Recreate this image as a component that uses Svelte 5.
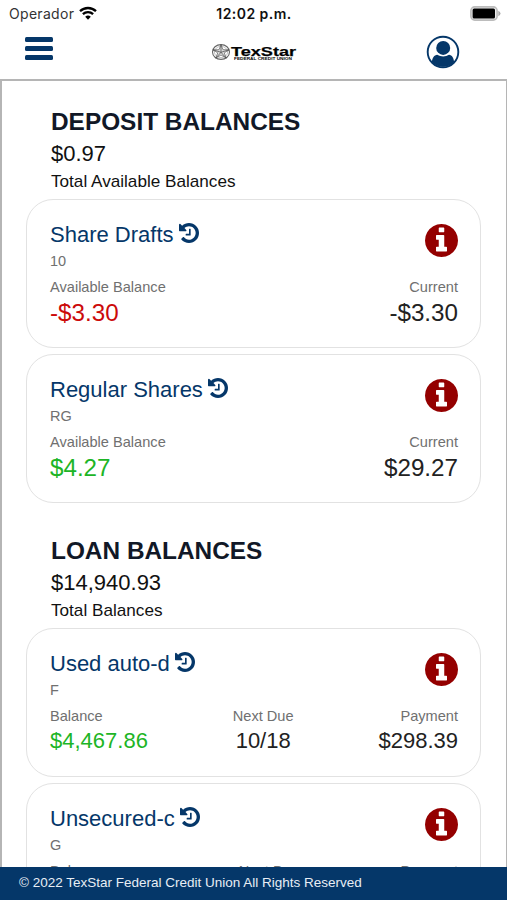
<script>
	// Accounts grouped by section
	const sections = [
		{
			title: 'DEPOSIT BALANCES',
			total: '$0.97',
			caption: 'Total Available Balances',
			accounts: [
				{
					name: 'Share Drafts',
					code: '10',
					fields: [
						{ label: 'Available Balance', value: '-$3.30', tone: 'negative' },
						{ label: 'Current', value: '-$3.30' }
					]
				},
				{
					name: 'Regular Shares',
					code: 'RG',
					fields: [
						{ label: 'Available Balance', value: '$4.27', tone: 'positive' },
						{ label: 'Current', value: '$29.27' }
					]
				}
			]
		},
		{
			title: 'LOAN BALANCES',
			total: '$14,940.93',
			caption: 'Total Balances',
			accounts: [
				{
					name: 'Used auto-d',
					code: 'F',
					fields: [
						{ label: 'Balance', value: '$4,467.86', tone: 'positive' },
						{ label: 'Next Due', value: '10/18' },
						{ label: 'Payment', value: '$298.39' }
					]
				},
				{
					name: 'Unsecured-c',
					code: 'G',
					fields: [
						{ label: 'Balance', value: '$10,473.07', tone: 'positive' },
						{ label: 'Next Due', value: '10/18' },
						{ label: 'Payment', value: '$210.00' }
					]
				}
			]
		}
	];
</script>

<div class="screen">
	<div class="status-bar">
		<div class="carrier">
			<span>Operador</span>
			<svg class="wifi" viewBox="0 0 18 14">
				<path d="M1 5.2a11.6 11.6 0 0 1 16 0" />
				<path d="M3.9 8.1a7.4 7.4 0 0 1 10.2 0" />
				<path class="wifi-dot" d="M9 13.7l-2.8-2.9a4 4 0 0 1 5.6 0z" />
			</svg>
		</div>
		<div class="clock">12:02 p.m.</div>
		<svg class="battery" viewBox="0 0 31 15">
			<rect x="0.9" y="0.9" width="26.2" height="13.2" rx="3.8" fill="#eee" stroke="#bcbcbc" stroke-width="1.6" />
			<rect x="2.6" y="2.6" width="22.4" height="9.8" rx="1.5" fill="#000" />
			<path d="M28.3 4.8q2.2 1 2.2 2.7t-2.2 2.7z" fill="#aaa" />
		</svg>
	</div>

	<header>
		<button class="menu" aria-label="Menu">
			<span></span>
			<span></span>
			<span></span>
		</button>
		<svg class="logo" viewBox="0 0 86 20">
			<ellipse cx="10" cy="10" rx="8.5" ry="7.4" fill="#fff" stroke="#666" stroke-width="1.1" />
			<ellipse cx="10" cy="10" rx="6.6" ry="5.6" fill="none" stroke="#999" stroke-width="0.6" />
			<path
				d="M10 2.7l2 5 6 .1-4.7 3.1 1.9 5.3-5.2-3.2-5.2 3.2 1.9-5.3L2 7.8l6-.1z"
				fill="#ddd"
				stroke="#444"
				stroke-width="0.6"
			/>
			<path d="M10 2.7v7.6M18 7.8l-8 2.5M15.2 16.2l-5.2-5.9M4.8 16.2l5.2-5.9M2 7.8l8 2.5" stroke="#444" stroke-width="0.7" />
			<text x="20" y="13.6" class="logo-name" textLength="65" lengthAdjust="spacingAndGlyphs">TexStar</text>
			<text x="23" y="18.1" class="logo-sub" textLength="58" lengthAdjust="spacingAndGlyphs">FEDERAL CREDIT UNION</text>
		</svg>
		<button class="profile" aria-label="Profile">
			<svg viewBox="0 0 34 34">
				<circle cx="17" cy="17" r="15.3" fill="#fff" stroke="#053769" stroke-width="1.9" />
				<circle cx="17.2" cy="12.9" r="7" fill="#053769" />
				<path
					d="M5.9 27.2C6.2 22.9 8.2 20.1 11.2 19.8Q14 21.6 17.2 21.6T23 19.8C26 20.1 27.8 22.9 28.1 27.2A15.6 15.6 0 0 1 5.9 27.2z"
					fill="#053769"
				/>
			</svg>
		</button>
	</header>

	<main>
		{#each sections as section}
			<section>
				<div class="summary">
					<h2>{section.title}</h2>
					<div class="total">{section.total}</div>
					<div class="caption">{section.caption}</div>
				</div>
				{#each section.accounts as account}
					<div class="card">
						<div class="card-top">
							<div>
								<div class="name">
									<span>{account.name}</span>
									<svg class="history" viewBox="0 0 1536 1536">
										<path
											d="M1536 768q0 156-61 298t-164 245-245 164-298 61q-172 0-327-72.5t-264-204.5q-7-10-6.5-22.5t8.5-20.5l137-138q10-9 25-9 16 2 23 12 73 95 179 147t225 52q104 0 198.5-40.5t163.5-109.5 109.5-163.5 40.5-198.5-40.5-198.5-109.5-163.5-163.5-109.5-198.5-40.5q-98 0-188 35.5t-160 101.5l137 138q31 30 14 69-17 40-59 40h-448q-26 0-45-19t-19-45v-448q0-42 40-59 39-17 69 14l130 129q107-101 244.5-156.5t284.5-55.5q156 0 298 61t245 164 164 245 61 298zM896 480v448q0 14-9 23t-23 9h-320q-14 0-23-9t-9-23v-64q0-14 9-23t23-9h224v-352q0-14 9-23t23-9h64q14 0 23 9t9 23z"
										/>
									</svg>
								</div>
								<div class="code">{account.code}</div>
							</div>
							<svg class="info" viewBox="0 0 1536 1536">
								<circle cx="768" cy="768" r="700" fill="#fff" />
								<path
									d="M1024 1248v-160q0-14-9-23t-23-9h-96v-512q0-14-9-23t-23-9h-320q-14 0-23 9t-9 23v160q0 14 9 23t23 9h96v320h-96q-14 0-23 9t-9 23v160q0 14 9 23t23 9h448q14 0 23-9t9-23zM896 352v-160q0-14-9-23t-23-9h-192q-14 0-23 9t-9 23v160q0 14 9 23t23 9h192q14 0 23-9t9-23zM1536 768q0 209-103 385.5t-279.5 279.5-385.5 103-385.5-103-279.5-279.5-103-385.5 103-385.5 279.5-279.5 385.5-103 385.5 103 279.5 279.5 103 385.5z"
								/>
							</svg>
						</div>
						<div class="fields" class:compact={account.fields.length > 2}>
							{#each account.fields as field}
								<div class="field">
									<div class="label">{field.label}</div>
									<div class="value {field.tone}">{field.value}</div>
								</div>
							{/each}
						</div>
					</div>
				{/each}
			</section>
		{/each}
	</main>

	<footer>© 2022 TexStar Federal Credit Union All Rights Reserved</footer>
</div>

<style>
	:global(body) {
		margin: 0;
		background: #fff;
	}

	.screen {
		display: flex;
		flex-direction: column;
		height: 900px;
		overflow: hidden;
		box-sizing: border-box;
		background: #fff;
		font-family: 'Liberation Sans', Arial, sans-serif;
		color: #111;
	}

	.status-bar {
		display: grid;
		grid-template-columns: 1fr auto 1fr;
		align-items: center;
		height: 26px;
		flex-shrink: 0;
		padding: 0 6px 0 9px;
		font-family: Inter, sans-serif;
		font-size: 14px;
	}

	.carrier {
		display: flex;
		align-items: center;
		gap: 5px;
		letter-spacing: 0.3px;
		color: #333;
	}

	.wifi {
		width: 18px;
		height: 14px;
		fill: none;
		stroke: #000;
		stroke-width: 2.3;
	}

	.wifi-dot {
		fill: #000;
		stroke: none;
	}

	.clock {
		margin-right: 2px;
		font-weight: 600;
		letter-spacing: 0.45px;
	}

	.battery {
		width: 31px;
		height: 15px;
		justify-self: end;
	}

	header {
		display: grid;
		grid-template-columns: 1fr auto 1fr;
		align-items: center;
		height: 53px;
		flex-shrink: 0;
		box-sizing: border-box;
		padding: 0 47px 2px 25px;
	}

	button {
		padding: 0;
		border: none;
		background: none;
	}

	.menu {
		display: flex;
		flex-direction: column;
		gap: 4px;
		width: 28px;
		margin-top: -7px;
	}

	.menu span {
		height: 5px;
		border-radius: 1.5px;
		background: #053769;
	}

	.logo {
		width: 86px;
		height: 20px;
		margin-left: 22px;
	}

	.logo-name {
		font-size: 13.6px;
		font-weight: bold;
		stroke: #111;
		stroke-width: 0.25px;
	}

	.logo-sub {
		font-size: 4.2px;
		font-weight: bold;
	}

	.profile {
		justify-self: end;
		width: 34px;
		height: 34px;
		margin-top: 1px;
	}

	.profile svg {
		display: block;
	}

	main {
		flex: 1;
		min-height: 0;
		overflow: hidden;
		box-sizing: border-box;
		padding: 25px 24px 0;
		border: 2px solid #b5b5b5;
		border-right-width: 1px;
		padding-right: 25px;
		border-bottom: none;
	}

	section {
		margin-bottom: 32px;
	}

	.summary {
		padding: 0 25px 7px;
	}

	h2 {
		margin: 0;
		font-size: 24.4px;
		line-height: 32px;
		color: #111827;
	}

	.total {
		font-size: 22px;
		line-height: 32px;
	}

	.caption {
		font-size: 17.15px;
		line-height: 22px;
	}

	.card {
		height: 149px;
		box-sizing: border-box;
		margin-bottom: 6px;
		padding: 22px 22px 0 23px;
		border: 1.5px solid #e2e2e2;
		border-radius: 27px;
	}

	.card-top {
		display: flex;
		justify-content: space-between;
		align-items: flex-start;
	}

	.name {
		display: flex;
		align-items: flex-start;
		gap: 5px;
		font-size: 22px;
		line-height: 26px;
		color: #053769;
	}

	.history {
		width: 20px;
		height: 20px;
		margin-top: 1px;
		fill: #053769;
	}

	.code {
		margin-top: 4px;
		font-size: 14.5px;
		line-height: 18px;
		color: #707070;
	}

	.info {
		width: 33px;
		height: 33px;
		margin-top: 2px;
		fill: #940000;
	}

	.fields {
		display: flex;
		justify-content: space-between;
		margin-top: 8px;
	}

	.field {
		text-align: center;
	}

	.field:first-child {
		text-align: left;
	}

	.field:last-child {
		text-align: right;
	}

	.label {
		font-size: 14.6px;
		line-height: 18px;
		color: #707070;
	}

	.value {
		margin-top: 3px;
		font-size: 24.2px;
		line-height: 28px;
		color: #222;
	}

	.compact .value {
		margin-top: 2px;
		font-size: 22px;
	}

	.value.negative {
		color: #cc0a0a;
	}

	.value.positive {
		color: #1db526;
	}

	footer {
		height: 33px;
		flex-shrink: 0;
		box-sizing: border-box;
		padding-left: 19px;
		background: #053769;
		color: #e8eef5;
		font-size: 13.5px;
		line-height: 31px;
	}
</style>
